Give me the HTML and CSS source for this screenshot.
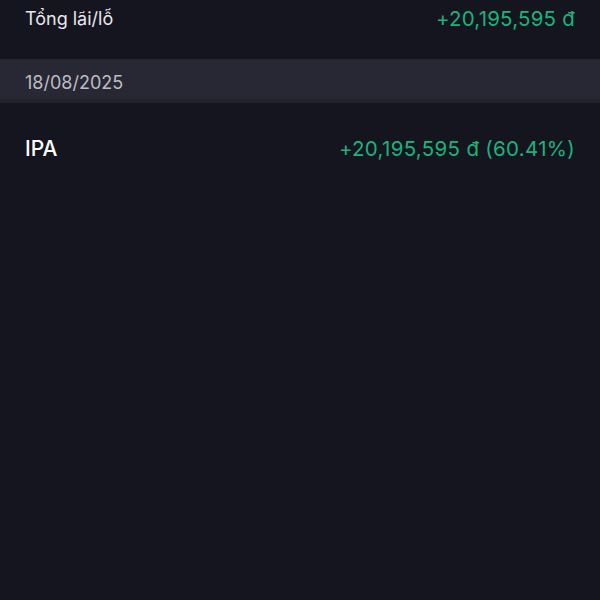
FILE: index.html
```html
<!DOCTYPE html>
<html lang="vi">
<head>
    <meta charset="UTF-8">
    <meta name="viewport" content="width=device-width, initial-scale=1.0">
    <title>Lãi/lỗ</title>
    <link rel="stylesheet" href="styles.css">
</head>
<body>

    <!-- Tổng -->
    <div class="total-row">
        <span class="label">Tổng lãi/lỗ</span>
        <span class="profit">+20,195,595 đ</span>
    </div>

    <!-- Ngày -->
    <div class="date-bar">18/08/2025</div>

    <div class="stock-row">
        <span class="symbol">IPA</span>
        <span class="profit big">+20,195,595 đ (60.41%)</span>
    </div>

</body>
</html>
```

FILE: styles.css
```css
* {
    margin: 0;
    padding: 0;
    box-sizing: border-box;
}

body {
    background-color: #14151f;
    color: #e6e6ea;
    font-family: 'Inter', 'Noto Sans', sans-serif;
    height: 600px;
}

.total-row {
    display: flex;
    justify-content: space-between;
    align-items: center;
    height: 59px;
    padding: 0 25px 22px 25px;
}

.label {
    font-size: 18px;
    color: #e8e8ec;
}

.profit {
    font-size: 20.5px;
    color: #1db27a;
    letter-spacing: 0.2px;
}

.date-bar {
    background-color: #272833;
    height: 44px;
    padding: 6px 25px 0 25px;
    display: flex;
    align-items: center;
    font-size: 18px;
    color: #bdbdc4;
    border-bottom: 4px solid #22232d;
}

.stock-row {
    display: flex;
    justify-content: space-between;
    align-items: center;
    padding: 33px 25px;
}

.symbol {
    font-size: 21px;
    font-weight: 500;
    color: #ffffff;
}

.profit.big {
    font-size: 20.5px;
    letter-spacing: 0.3px;
}
```
